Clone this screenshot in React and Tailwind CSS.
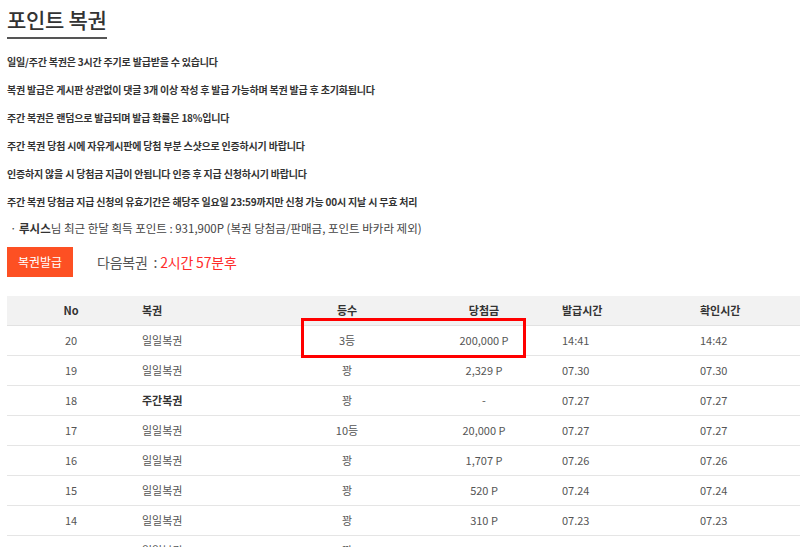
import React from 'react'

const notes = [
    '일일/주간 복권은 3시간 주기로 발급받을 수 있습니다',
    '복권 발급은 게시판 상관없이 댓글 3개 이상 작성 후 발급 가능하며 복권 발급 후 초기화됩니다',
    '주간 복권은 랜덤으로 발급되며 발급 확률은 18%입니다',
    '주간 복권 당첨 시에 자유게시판에 당첨 부분 스샷으로 인증하시기 바랍니다',
    '인증하지 않을 시 당첨금 지급이 안됩니다 인증 후 지급 신청하시기 바랍니다',
    '주간 복권 당첨금 지급 신청의 유효기간은 해당주 일요일 23:59까지만 신청 가능 00시 지날 시 무효 처리',
]

const rows = [
    { no: 20, name: '일일복권', rank: '3등', prize: '200,000 P', issued: '14:41', checked: '14:42' },
    { no: 19, name: '일일복권', rank: '꽝', prize: '2,329 P', issued: '07.30', checked: '07.30' },
    { no: 18, name: '주간복권', rank: '꽝', prize: '-', issued: '07.27', checked: '07.27', weekly: true },
    { no: 17, name: '일일복권', rank: '10등', prize: '20,000 P', issued: '07.27', checked: '07.27' },
    { no: 16, name: '일일복권', rank: '꽝', prize: '1,707 P', issued: '07.26', checked: '07.26' },
    { no: 15, name: '일일복권', rank: '꽝', prize: '520 P', issued: '07.24', checked: '07.24' },
    { no: 14, name: '일일복권', rank: '꽝', prize: '310 P', issued: '07.23', checked: '07.23' },
    { no: 13, name: '일일복권', rank: '꽝', prize: '1,709 P', issued: '07.21', checked: '07.21' },
]

const cols = 'grid grid-cols-[128px_140px_144px_130px_138px_1fr] items-center'

export default function App() {
    return (
        <div
            className="min-h-[547px] bg-white px-[7px] pt-[6px] text-[#333] overflow-hidden"
            style={{ fontFamily: '"Noto Sans CJK KR", "Noto Sans", sans-serif' }}
        >
            <h1 className="inline-block border-b-2 border-[#555] pb-[5px] text-[21px] leading-[26px] font-medium tracking-[-0.3px] text-[#333]">
                포인트 복권
            </h1>

            <div className="mt-[9px]">
                {notes.map((n, i) => (
                    <p key={i} className="text-[10px] leading-[28px] font-bold tracking-[-0.2px] text-[#333]">{n}</p>
                ))}
            </div>

            <p className="pl-[3px] text-[11.5px] leading-[24px] text-[#444]">
                · <b className="text-[#333]">루시스</b>님 최근 한달 획득 포인트 : 931,900P (복권 당첨금/판매금, 포인트 바카라 제외)
            </p>

            <div className="mt-[7px] flex items-center gap-[24px]">
                <button className="h-[30px] w-[66px] bg-[#fd5023] text-[12px] text-white">복권발급</button>
                <div className="text-[14px] tracking-[-0.2px] text-[#555]">
                    다음복권&nbsp; :&nbsp;<span className="text-[#ff2b2b]">2시간 57분후</span>
                </div>
            </div>

            <div className="relative mt-[19px] w-[800px] text-[11px] text-[#555]">
                <div className={`${cols} h-[30px] border-b border-[#e2e2e2] bg-[#f2f2f2] font-bold text-[#333]`}>
                    <div className="text-center">No</div>
                    <div className="pl-[7px]">복권</div>
                    <div className="text-center">등수</div>
                    <div className="text-center">당첨금</div>
                    <div className="pl-[13px]">발급시간</div>
                    <div className="pl-[13px]">확인시간</div>
                </div>
                {rows.map(r => (
                    <div key={r.no} className={`${cols} h-[30px] border-b border-[#e5e5e5]`}>
                        <div className="text-center">{r.no}</div>
                        <div className={r.weekly ? 'pl-[7px] font-bold text-[#333]' : 'pl-[7px]'}>{r.name}</div>
                        <div className="text-center">{r.rank}</div>
                        <div className="text-center">{r.prize}</div>
                        <div className="pl-[13px]">{r.issued}</div>
                        <div className="pl-[13px]">{r.checked}</div>
                    </div>
                ))}
                {/* highlight around the winning row */}
                <div className="absolute left-[294px] top-[22px] h-[40px] w-[225px] border-[3px] border-[#ff0000]" />
            </div>
        </div>
    )
}
